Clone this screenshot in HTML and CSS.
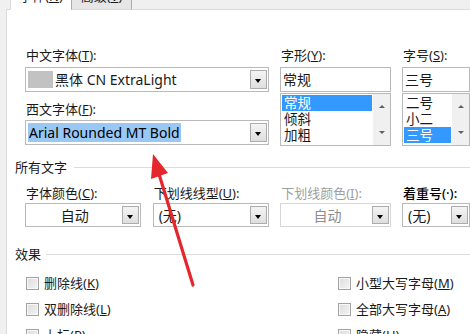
FILE: index.html
```html
<!DOCTYPE html>
<html lang="zh-CN">
<head>
    <meta charset="UTF-8">
    <meta name="viewport" content="width=device-width, initial-scale=1.0">
    <title>字体</title>
    <link rel="stylesheet" href="styles.css">
</head>
<body>
    <div class="dialog">
        <div class="tabs">
            <div class="tab active">字体(<u>N</u>)</div>
            <div class="tab">高级(<u>V</u>)</div>
        </div>
        <div class="page">
            <div class="font-row">
                <div class="col col-wide">
                    <label>中文字体(<u>T</u>):</label>
                    <div class="combo">
                        <span class="text"><span class="blank"></span>黑体 CN ExtraLight</span>
                        <span class="drop"></span>
                    </div>
                    <label class="second">西文字体(<u>F</u>):</label>
                    <div class="combo">
                        <span class="text"><span class="sel">Arial Rounded MT Bold</span></span>
                        <span class="drop"></span>
                    </div>
                </div>
                <div class="col col-style">
                    <label>字形(<u>Y</u>):</label>
                    <div class="edit">常规</div>
                    <div class="list">
                        <ul>
                            <li class="on">常规</li>
                            <li>倾斜</li>
                            <li>加粗</li>
                        </ul>
                        <div class="scroll"><span class="up"></span><span class="down"></span></div>
                    </div>
                </div>
                <div class="col col-size">
                    <label>字号(<u>S</u>):</label>
                    <div class="edit">三号</div>
                    <div class="list">
                        <ul>
                            <li>二号</li>
                            <li>小二</li>
                            <li class="on">三号</li>
                        </ul>
                        <div class="scroll"><span class="up"></span><span class="down"></span></div>
                    </div>
                </div>
            </div>

            <div class="group">所有文字</div>
            <div class="attr-row">
                <div class="col col-a">
                    <label>字体颜色(<u>C</u>):</label>
                    <div class="combo small">
                        <span class="text center">自动</span>
                        <span class="drop"></span>
                    </div>
                </div>
                <div class="col col-b">
                    <label>下划线线型(<u>U</u>):</label>
                    <div class="combo small">
                        <span class="text pad">(无)</span>
                        <span class="drop"></span>
                    </div>
                </div>
                <div class="col col-style disabled">
                    <label>下划线颜色(<u>I</u>):</label>
                    <div class="combo small">
                        <span class="text center">自动</span>
                        <span class="drop"></span>
                    </div>
                </div>
                <div class="col col-size">
                    <label class="dark">着重号(·):</label>
                    <div class="combo small">
                        <span class="text pad">(无)</span>
                        <span class="drop"></span>
                    </div>
                </div>
            </div>

            <div class="group short">效果</div>
            <div class="effects">
                <div class="check"><span class="box"></span>删除线(<u>K</u>)</div>
                <div class="check"><span class="box"></span>小型大写字母(<u>M</u>)</div>
                <div class="check"><span class="box"></span>双删除线(<u>L</u>)</div>
                <div class="check"><span class="box"></span>全部大写字母(<u>A</u>)</div>
                <div class="check"><span class="box"></span>上标(<u>P</u>)</div>
                <div class="check"><span class="box"></span>隐藏(<u>H</u>)</div>
            </div>
        </div>

        <svg class="arrow" width="470" height="334" viewBox="0 0 470 334">
            <path d="M159 174 L193 285" stroke="#e4262d" stroke-width="3.2" stroke-linecap="round" fill="none"/>
            <polygon points="153,154 168,173 151,179" fill="#e4262d"/>
        </svg>
    </div>
</body>
</html>
```

FILE: styles.css
```css
body {
    margin: 0;
    background-color: #f0f0f0;
    font-family: 'Noto Sans', 'Noto Sans CJK SC', sans-serif;
    font-size: 13px;
    color: #1a1a1a;
}
.dialog {
    position: relative;
    width: 470px;
    height: 334px;
    overflow: hidden;
}
u {
    text-decoration: underline;
    text-underline-offset: 1px;
}

/* tabs, cut off by the top edge */
.tabs {
    position: relative;
    z-index: 1;
    display: flex;
    align-items: flex-end;
    height: 10px;
    margin-bottom: -1px;
    padding-left: 10px;
}
.tab {
    box-sizing: border-box;
    display: flex;
    align-items: flex-end;
    justify-content: center;
    height: 24px;
    padding-bottom: 6px;
    line-height: 14px;
    border: 1px solid #d9d9d9;
}
.tab.active {
    width: 62px;
    background-color: #fff;
    border-bottom-color: #fff;
}
.tab + .tab {
    width: 61px;
    margin-left: -1px;
    background-color: #e6e6e6;
    border-color: #acacac;
    border-bottom-color: #d9d9d9;
}

.page {
    box-sizing: border-box;
    height: 330px;
    margin-left: 6px;
    background-color: #fff;
    border-left: 1px solid #d9d9d9;
    border-top: 1px solid #d9d9d9;
}

label {
    display: block;
    line-height: 16px;
    margin-bottom: 4px;
    padding-left: 1px;
    white-space: nowrap;
}
label.second {
    margin-top: 9px;
    margin-bottom: 3px;
}
label.dark {
    color: #000;
    font-weight: 500;
}

.font-row,
.attr-row {
    display: flex;
    padding-left: 18px;
}
.font-row {
    margin-top: 37px;
}
.col-wide { width: 253px; }
.col-style { width: 115px; margin-left: 11px; }
.col-size { width: 68px; margin-left: 11px; flex-shrink: 0; }
.col-a { width: 120px; }
.col-b { width: 121px; margin-left: 12px; }

.combo,
.edit {
    box-sizing: border-box;
    height: 25px;
    border: 1px solid #b9b9b9;
    background-color: #fff;
    font-size: 14px;
}
.combo {
    display: flex;
    align-items: center;
    padding: 2px 1px 2px 2px;
}
.combo.small {
    height: 24px;
}
.combo .text {
    flex: 1;
    display: flex;
    align-items: center;
    height: 19px;
    line-height: 19px;
    white-space: nowrap;
}
.combo .text.center {
    justify-content: center;
}
.combo .text.pad {
    padding-left: 3px;
}
.blank {
    width: 25px;
    height: 17px;
    margin-right: 2px;
    background-color: #c2c2c2;
}
.sel {
    background-color: #99c8f5;
    color: #000;
    padding: 0 1px;
}
.drop {
    box-sizing: border-box;
    position: relative;
    width: 17px;
    height: 100%;
    border: 1px solid #acacac;
    background: linear-gradient(#f4f4f4, #dedede);
}
.drop::after {
    content: '';
    position: absolute;
    left: 4px;
    top: 8px;
    border-left: 3.5px solid transparent;
    border-right: 3.5px solid transparent;
    border-top: 4px solid #000;
}

.edit {
    line-height: 23px;
    padding-left: 2px;
}

.list {
    box-sizing: border-box;
    display: flex;
    height: 53px;
    margin-top: 1px;
    border: 1px solid #b9b9b9;
    font-size: 13.5px;
}
.list ul {
    flex: 1;
    margin: 0;
    padding: 1px 1px 0 1px;
    list-style: none;
}
.list li {
    height: 16px;
    line-height: 16px;
    padding-left: 2px;
    overflow: hidden;
}
.list li.on {
    background-color: #3399ff;
    color: #fff;
}
.scroll {
    position: relative;
    width: 17px;
    background-color: #f0f0f0;
}
.scroll .up,
.scroll .down {
    position: absolute;
    left: 6px;
    border-left: 3px solid transparent;
    border-right: 3px solid transparent;
}
.scroll .up {
    top: 11px;
    border-bottom: 3px solid #606060;
}
.scroll .down {
    bottom: 11px;
    border-top: 3px solid #606060;
}

.disabled label {
    color: #a0a0a0;
}
.disabled .combo {
    border-color: #d6d6d6;
}
.disabled .combo .text {
    color: #8c8c8c;
}

.group {
    display: flex;
    align-items: center;
    margin-top: 12px;
    padding-left: 8px;
    line-height: 18px;
}
.group::after {
    content: '';
    flex: 1;
    margin-left: 7px;
    border-top: 1px solid #dcdcdc;
}
.attr-row {
    margin-top: 9px;
}
.attr-row label {
    margin-bottom: 2px;
}
.group.short {
    margin-top: 18px;
}
.group.short::after {
    margin-left: 5px;
}

.effects {
    display: grid;
    grid-template-columns: 312px auto;
    grid-auto-rows: 26px;
    margin-top: 7px;
    padding-left: 19px;
}
.check {
    display: flex;
    align-items: center;
    line-height: 24px;
    white-space: nowrap;
}
.box {
    box-sizing: border-box;
    width: 13px;
    height: 13px;
    margin-right: 5px;
    border: 1px solid #a3a3a3;
    background: linear-gradient(135deg, #dcdcdc, #f4f4f4);
    box-shadow: inset 0 0 0 1px #f7f7f7;
}

.arrow {
    position: absolute;
    left: 0;
    top: 0;
    pointer-events: none;
}
```
